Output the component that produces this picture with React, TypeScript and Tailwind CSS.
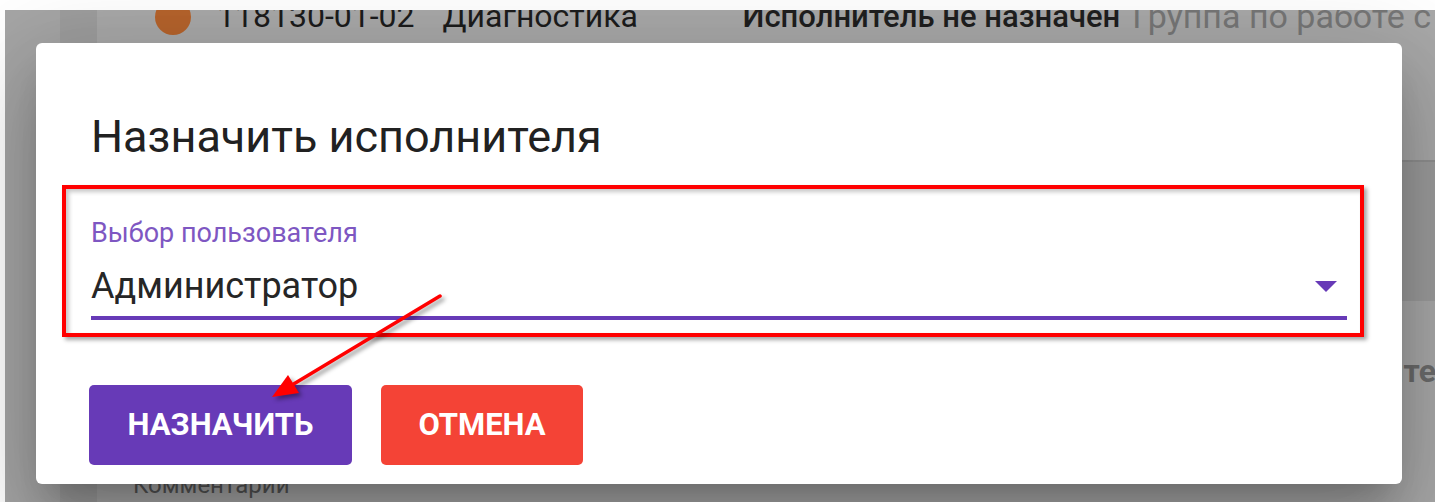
import { useState } from "react";

const users = ["Администратор", "Оператор", "Инженер"];

/** Task list row behind the modal, dimmed by the backdrop. */
function TaskBackdrop(): React.JSX.Element {
  return (
    <div className="mt-[10px] ml-[5px] flex h-[492px] bg-[#a8a8a8]">
      <div className="w-[55px] bg-[#a5a5a5]" />
      <div className="w-[37px] bg-[#9d9d9d]" />
      <div className="flex flex-1 flex-col overflow-hidden">
        <div className="flex h-[152px] items-start border-b-2 border-[#8f8f8f] pl-[58px]">
          <div className="-mt-[12px] flex items-center whitespace-nowrap text-[32px] leading-[37px]">
            <span className="mr-[26px] h-[36px] w-[36px] shrink-0 rounded-full bg-[#b5632c]" />
            <span className="text-[#1c1c1c]">118130-01-02</span>
            <span className="ml-[28px] w-[300px] text-[#1c1c1c]">Диагностика</span>
            <span className="text-[31px] font-medium text-[#1f1f1f]">Исполнитель не назначен</span>
            <span className="ml-[12px] text-[34px] text-[#767676]">Группа по работе с клиентами</span>
          </div>
        </div>
        <div className="h-[139px] bg-[#9b9b9b]" />
        <div className="flex h-[170px] items-start justify-end pt-[52px]">
          <span className="-mr-[1px] whitespace-nowrap text-[32px] font-bold leading-[37px] text-[#6b6b6b]">
            Данные о клиенте
          </span>
        </div>
        <div className="pl-[36px] text-[24px] leading-[28px] text-[#555555]">Комментарии</div>
      </div>
    </div>
  );
}

function AssignDialog(): React.JSX.Element {
  const [user] = useState(users[0]);

  return (
    <div className="absolute left-[36px] top-[43px] flex h-[441px] w-[1366px] flex-col rounded-[6px] bg-white px-[55px] pt-[67px] shadow-[0_22px_30px_-14px_rgba(0,0,0,0.2),0_48px_76px_6px_rgba(0,0,0,0.14),0_18px_92px_16px_rgba(0,0,0,0.12)]">
      <h2 className="text-[45px] font-normal leading-[53px] text-[#212121]">Назначить исполнителя</h2>

      <div className="mt-[54px] flex flex-col">
        <label className="text-[27px] leading-[32px] text-[#7e57c2]">Выбор пользователя</label>
        <div className="mt-[16px] flex items-center justify-between pr-[10px]">
          <span className="text-[36px] leading-[42px] text-[#262626]">{user}</span>
          <svg width="22" height="11" viewBox="0 0 22 11" className="-mb-[1px]">
            <path d="M0 0h22L11 11z" fill="#673ab7" />
          </svg>
        </div>
        <div className="mt-[9px] h-[4px] bg-[#673ab7]" />
      </div>

      <div className="mt-[65px] -ml-[2px] flex gap-[29px]">
        <button className="flex h-[80px] w-[263px] items-center justify-center rounded-[5px] bg-[#673ab7] text-[31px] font-bold uppercase text-white">
          Назначить
        </button>
        <button className="flex h-[80px] w-[202px] items-center justify-center rounded-[5px] bg-[#f44336] text-[31px] font-bold uppercase text-white">
          Отмена
        </button>
      </div>
    </div>
  );
}

export default function App(): React.JSX.Element {
  return (
    <div className="relative h-[502px] w-[1435px] overflow-hidden bg-white font-['Roboto',sans-serif]">
      <TaskBackdrop />
      <AssignDialog />

      {/* red callout frame around the user select */}
      <div className="absolute left-[62px] top-[185px] h-[152px] w-[1302px] border-4 border-[#ff0000] shadow-[3px_3px_4px_rgba(0,0,0,0.35),inset_3px_3px_4px_rgba(0,0,0,0.22)]" />

      {/* callout arrow pointing at the assign button */}
      <svg
        className="absolute left-0 top-0 drop-shadow-[3px_3px_2px_rgba(0,0,0,0.4)]"
        width="1435"
        height="502"
        viewBox="0 0 1435 502"
      >
        <line x1="440" y1="296" x2="292" y2="385" stroke="#ff0000" strokeWidth="3.5" strokeLinecap="round" />
        <polygon points="272,397 288,375 299,393" fill="#ff0000" />
      </svg>
    </div>
  );
}
